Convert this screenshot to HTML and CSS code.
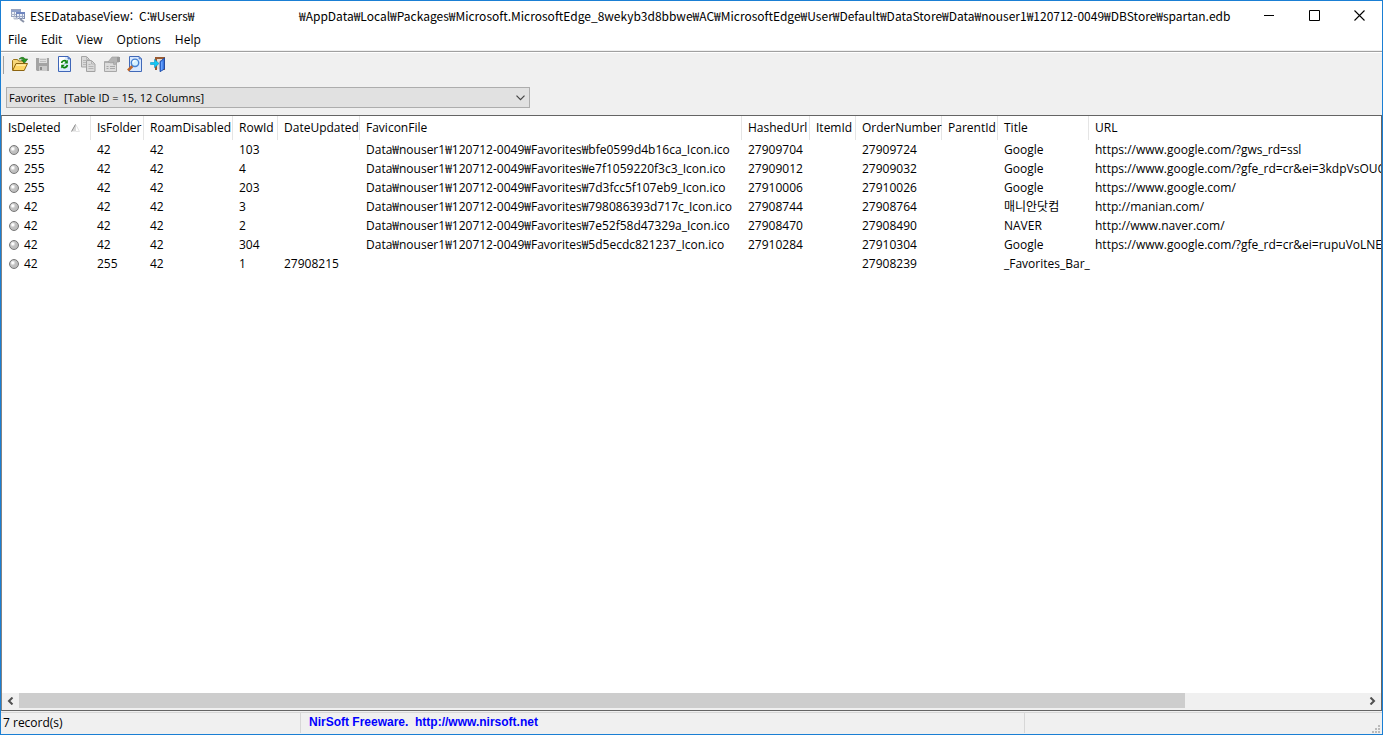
FILE: index.html
```html
<!DOCTYPE html>
<html lang="ko">
<head>
<meta charset="utf-8">
<title>ESEDatabaseView</title>
<link rel="stylesheet" href="styles.css">
</head>
<body>
<div class="window">
  <header class="titlebar">
    <svg class="app-icon" width="16" height="16" viewBox="0 0 16 16">
      <rect x="1.500" y="1.500" width="9" height="7" fill="#eef1f7" stroke="#9aa5c0"/>
      <path d="M1 2h10v2H1z" fill="#8fa0c8"/><path d="M1 6.500h9M4.500 4v5M7.500 4v5" stroke="#a9b3c8"/>
      <rect x="6.500" y="4.500" width="8" height="6" fill="#e8edf8" stroke="#7f8db0"/>
      <path d="M6 4h9v2H6z" fill="#6f86c0"/><path d="M7 8.500h7M9.500 6v5M12.500 6v5" stroke="#98a5c4"/>
      <path d="M10 11l4 3" stroke="#8a93a8" stroke-width="2"/><path d="M3 9.500h5v2H4z" fill="#b8bfd0"/>
    </svg>
    <h1 class="title"><span class="app-name">ESEDatabaseView:</span><span class="path-root">C:₩Users₩</span><span>₩AppData₩Local₩Packages₩Microsoft.MicrosoftEdge_8wekyb3d8bbwe₩AC₩MicrosoftEdge₩User₩Default₩DataStore₩Data₩nouser1₩120712-0049₩DBStore₩spartan.edb</span></h1>
    <div class="controls">
      <button aria-label="Minimize"><svg width="11" height="11"><path d="M0 5.500h10" stroke="#000"/></svg></button>
      <button aria-label="Maximize"><svg width="11" height="11"><path d="M.5.5h10v10H.5z" fill="none" stroke="#000"/></svg></button>
      <button aria-label="Close"><svg width="11" height="11"><path d="M.5.5l10 10M10.500.5l-10 10" stroke="#000" stroke-width="1.100"/></svg></button>
    </div>
  </header>
  <nav class="menubar">
    <button>File</button><button>Edit</button><button>View</button><button>Options</button><button>Help</button>
  </nav>
  <div class="toolbar">
    <button aria-label="Open"><svg width="16" height="16" viewBox="0 0 16 16">
      <path d="M.5 14V4.500l1-1h4l1 1.500h5V14z" fill="#f6d77a" stroke="#9b7418"/>
      <path d="M.7 14.500L4 7.500h11.500l-3.300 7z" fill="#ffd766" stroke="#8c6410"/>
      <path d="M4.500 8.500h9.500l-.6 1.300H4z" fill="#fff0b0"/>
      <path d="M7 3.200C9 .6 12 1 13 3h2.700L12.600 7 9.300 4h2C10.300 2.600 8.700 2.500 7 3.200z" fill="#2c9a24" stroke="#176012" stroke-width=".6"/>
    </svg></button>
    <button aria-label="Save" disabled><svg width="16" height="16" viewBox="0 0 16 16">
      <path d="M1 2h13v13H2l-1-1z" fill="#a3a3a3"/><path d="M4 2h8v5H4z" fill="#dedede"/><path d="M5 3.500h6M5 5.500h6" stroke="#bdbdbd"/>
      <path d="M4 10h8v5H4z" fill="#c9c9c9"/><path d="M5 11h2v3H5z" fill="#8b8b8b"/>
    </svg></button>
    <button aria-label="Refresh"><svg width="16" height="16" viewBox="0 0 16 16">
      <path d="M.5.5H10L12.500 3v12.500H.5z" fill="#dcebff" stroke="#3f66b8"/><path d="M1 1h6v5L1 12z" fill="#fff"/><path d="M10 .5V3h2.500z" fill="#7fa4e4" stroke="#3f66b8" stroke-width=".7"/>
      <path d="M3.600 7C4 4.500 7 4 8.300 5.300M9.400 9C9 11.500 6 12.300 4.600 10.800" fill="none" stroke="#0a820a" stroke-width="1.700"/>
      <path d="M9.800 3.800v3.700H6.200zM3.200 12.500V8.800h3.600z" fill="#0a820a"/>
    </svg></button>
    <button aria-label="Copy" disabled><svg width="16" height="16" viewBox="0 0 16 16">
      <path d="M.5.5h5L8.500 3.500V11h-8z" fill="#dadada" stroke="#a5a5a5"/><path d="M5.500.5v3h3M2 4.500h3M2 6.500h3M2 8.500h3" fill="none" stroke="#b8b8b8"/>
      <path d="M5.500 4.500h5l3.500 3.500v7.500H5.500z" fill="#dadada" stroke="#a2a2a2"/><path d="M10.500 4.500V8H14M7.500 8.500h2M7.500 10.500h5M7.500 12.500h5" fill="none" stroke="#b4b4b4"/>
    </svg></button>
    <button aria-label="Properties" disabled><svg width="16" height="16" viewBox="0 0 16 16">
      <path d="M.5 5.500h12v10H.5z" fill="#dcdcdc" stroke="#a8a8a8"/><path d="M1 5h11v2H1z" fill="#b0b0b0"/><path d="M2.500 10.500h2M2.500 12.500h2M6 10.500h5M6 12.500h5" stroke="#a8a8a8"/>
      <path d="M4 6l4-5h7v5h-2l-2 3-2-1 1-2-3 1z" fill="#b4b4b4" stroke="#a0a0a0" stroke-width=".7"/><path d="M13 1h3v5h-3z" fill="#9a9a9a"/>
    </svg></button>
    <button aria-label="Find"><svg width="16" height="16" viewBox="0 0 16 16">
      <path d="M2.500.5H12L14.500 3v12.500h-12z" fill="#d8e8ff" stroke="#4169b8"/><path d="M12 .5V3h2.500z" fill="#7fa4e4" stroke="#4169b8" stroke-width=".6"/>
      <path d="M5.500 10L1 14.500" stroke="#c0662a" stroke-width="2.600"/><circle cx="8" cy="6.800" r="3.700" fill="#d5f1ff" stroke="#4780d0" stroke-width="1.400"/><path d="M6 6.500Q6.500 4.600 8.500 4.700" fill="none" stroke="#fff" stroke-width="1.300"/>
    </svg></button>
    <button aria-label="Exit"><svg width="16" height="16" viewBox="0 0 16 16">
      <path d="M5 1h10v13h-2V3H7v11H5z" fill="#995a32"/><path d="M7 3h4v10H7z" fill="#e8e0d8"/>
      <path d="M10 5.500L14.500 2v11L10 15.700z" fill="#3976e0" stroke="#1745a0" stroke-width=".8"/><path d="M11 6l1.500-1v8.500L11 14.500z" fill="#69a4ff"/>
      <path d="M.5 6.500h4V3.300L9 7.500l-4.500 4.200V8.500h-4z" fill="#10c8f4" stroke="#0a95c8" stroke-width=".6"/>
    </svg></button>
  </div>
  <div class="table-picker">
    <select aria-label="Table"><option>Favorites&nbsp;&nbsp; [Table ID = 15, 12 Columns]</option></select>
    <svg class="chevron" width="9" height="6"><path d="M.5.7l4 4 4-4" fill="none" stroke="#444" stroke-width="1.200"/></svg>
  </div>
  <main class="list">
    <div class="viewport">
      <table>
        <colgroup><col class="w89"><col class="w53"><col class="w89"><col class="w45"><col class="w82"><col class="w382"><col class="w68"><col class="w46"><col class="w86"><col class="w56"><col class="w91"><col class="w505"></colgroup>
        <thead><tr><th><span class="sorted">IsDeleted<svg width="10" height="8"><path d="M.5 7.500L4 .5h1v7z" fill="#d8d8d8"/><path d="M.5 7.500L4.500.5" stroke="#888"/><path d="M5 1l3.500 6.500H5" fill="none" stroke="#e4e4e4"/></svg></span></th><th>IsFolder</th><th>RoamDisabled</th><th>RowId</th><th>DateUpdated</th><th>FaviconFile</th><th>HashedUrl</th><th>ItemId</th><th>OrderNumber</th><th>ParentId</th><th>Title</th><th>URL</th></tr></thead>
        <tbody>
          <tr><td><i class="dot"></i>255</td><td>42</td><td>42</td><td>103</td><td></td><td>Data₩nouser1₩120712-0049₩Favorites₩bfe0599d4b16ca_Icon.ico</td><td>27909704</td><td></td><td>27909724</td><td></td><td>Google</td><td>https://www.google.com/?gws_rd=ssl</td></tr>
          <tr><td><i class="dot"></i>255</td><td>42</td><td>42</td><td>4</td><td></td><td>Data₩nouser1₩120712-0049₩Favorites₩e7f1059220f3c3_Icon.ico</td><td>27909012</td><td></td><td>27909032</td><td></td><td>Google</td><td>https://www.google.com/?gfe_rd=cr&amp;ei=3kdpVsOUC</td></tr>
          <tr><td><i class="dot"></i>255</td><td>42</td><td>42</td><td>203</td><td></td><td>Data₩nouser1₩120712-0049₩Favorites₩7d3fcc5f107eb9_Icon.ico</td><td>27910006</td><td></td><td>27910026</td><td></td><td>Google</td><td>https://www.google.com/</td></tr>
          <tr><td><i class="dot"></i>42</td><td>42</td><td>42</td><td>3</td><td></td><td>Data₩nouser1₩120712-0049₩Favorites₩798086393d717c_Icon.ico</td><td>27908744</td><td></td><td>27908764</td><td></td><td>매니안닷컴</td><td>http://manian.com/</td></tr>
          <tr><td><i class="dot"></i>42</td><td>42</td><td>42</td><td>2</td><td></td><td>Data₩nouser1₩120712-0049₩Favorites₩7e52f58d47329a_Icon.ico</td><td>27908470</td><td></td><td>27908490</td><td></td><td>NAVER</td><td>http://www.naver.com/</td></tr>
          <tr><td><i class="dot"></i>42</td><td>42</td><td>42</td><td>304</td><td></td><td>Data₩nouser1₩120712-0049₩Favorites₩5d5ecdc821237_Icon.ico</td><td>27910284</td><td></td><td>27910304</td><td></td><td>Google</td><td>https://www.google.com/?gfe_rd=cr&amp;ei=rupuVoLNEe</td></tr>
          <tr><td><i class="dot"></i>42</td><td>255</td><td>42</td><td>1</td><td>27908215</td><td></td><td></td><td></td><td>27908239</td><td></td><td>_Favorites_Bar_</td><td></td></tr>
        </tbody>
      </table>
    </div>
    <div class="scrollbar">
      <button aria-label="Scroll left"><svg width="7" height="8"><path d="M5.500.5L2 4l3.500 3.500" fill="none" stroke="#505050" stroke-width="2"/></svg></button>
      <div class="track"><div class="thumb"></div></div>
      <button aria-label="Scroll right"><svg width="7" height="8"><path d="M1.500.5L5 4 1.500 7.500" fill="none" stroke="#505050" stroke-width="2"/></svg></button>
    </div>
  </main>
  <footer class="statusbar">
    <span class="records">7 record(s)</span>
    <a href="http://www.nirsoft.net">NirSoft Freeware.&nbsp; http://www.nirsoft.net</a>
    <span class="rest"><svg width="8" height="8" fill="#bababa"><path d="M6 0h2v2H6zM3 3h2v2H3zM6 3h2v2H6zM0 6h2v2H0zM3 6h2v2H3zM6 6h2v2H6z"/></svg></span>
  </footer>
</div>
</body>
</html>
```
FILE: styles.css
```css
* { box-sizing: border-box; }
body { margin: 0; font: 12px/18px "Open Sans", "Noto Sans CJK KR", sans-serif; color: #000; }
button { border: 0; padding: 0; background: none; font: inherit; color: inherit; }
svg { display: block; flex: none; }
.window { display: flex; flex-direction: column; height: 100vh; border: 1px solid #1a7fd4; background: #f0f0f0; overflow: hidden; }

.titlebar { display: flex; align-items: center; height: 29px; background: #fff; }
.app-icon { margin: 0 4px 0 9px; }
.title { display: flex; flex: 1; min-width: 0; margin: 0; font: 12px/18px "Noto Sans CJK KR", sans-serif; white-space: pre; }
.title span { flex: none; }
.app-name { width: 109px; }
.path-root { width: 160px; }
.controls { display: flex; }
.controls button { display: grid; place-items: center; width: 45px; height: 29px; }
.controls button:first-child { width: 46px; }

.menubar { display: flex; gap: 14px; height: 21px; padding: 0 7px; background: #fff; border-bottom: 1px solid #f0f0f0; }
.menubar button { line-height: 20px; }

.toolbar { display: flex; height: 28px; padding: 0 0 0 2px; border-top: 1px solid #a0a0a0; box-shadow: inset 0 1px #fff; }
.toolbar::before { content: ""; width: 1px; height: 18px; margin: 4px 4px 0 0; background: #a0a0a0; }
.toolbar button { display: grid; place-items: center; width: 23px; height: 24px; }

.table-picker { display: flex; align-items: center; margin: 8px 5px 7px; }
.table-picker select { appearance: none; width: 524px; height: 21px; padding: 0 20px 0 2px; border: 1px solid #adadad; border-radius: 0; background: #e1e1e1; color: #000; font: 11px "Open Sans", sans-serif; }
.chevron { margin-left: -14px; pointer-events: none; }

.list { display: flex; flex-direction: column; flex: 1; min-height: 0; border: 1px solid #646464; border-left-color: #828282; background: #fff; }
.viewport { flex: 1; min-height: 0; overflow: hidden; }
table { width: 1592px; table-layout: fixed; border-collapse: separate; border-spacing: 0; }
th, td { padding: 0 0 0 6px; text-align: left; font-weight: 400; white-space: nowrap; }
th { height: 24px; border-right: 1px solid #e5e5e5; }
td { height: 19px; }
.w45 { width: 45px; } .w46 { width: 46px; } .w53 { width: 53px; } .w56 { width: 56px; }
.w68 { width: 68px; } .w82 { width: 82px; } .w86 { width: 86px; } .w89 { width: 89px; }
.w91 { width: 91px; } .w382 { width: 382px; } .w505 { width: 505px; }
.sorted { display: flex; align-items: center; justify-content: space-between; padding-right: 9px; }
.dot { display: inline-block; width: 10px; height: 10px; margin: 0 5px 0 1px; vertical-align: -1px; border: 1px solid #777; border-radius: 50%; background: radial-gradient(circle at 35% 35%, #fff 0, #fff 10%, #c4c4c4 35%, #b4b4b4 100%); }

.scrollbar { display: flex; height: 17px; padding-bottom: 1px; background: #f0f0f0; }
.scrollbar button { display: grid; place-items: center; width: 17px; }
.track { flex: 1; }
.thumb { width: 86.7%; height: 15px; background: #cdcdcd; }

.statusbar { display: flex; height: 22px; margin-top: 1px; padding: 0 2px 1px; border-top: 1px solid #d7d7d7; }
.records { width: 298px; border-right: 1px solid #d7d7d7; line-height: 20px; }
.statusbar a { width: 724px; padding-left: 8px; border-right: 1px solid #d7d7d7; color: #00f; font: bold 12px/18px "Liberation Sans", sans-serif; text-decoration: none; }
.rest { display: flex; flex: 1; align-items: flex-end; justify-content: flex-end; }
```
